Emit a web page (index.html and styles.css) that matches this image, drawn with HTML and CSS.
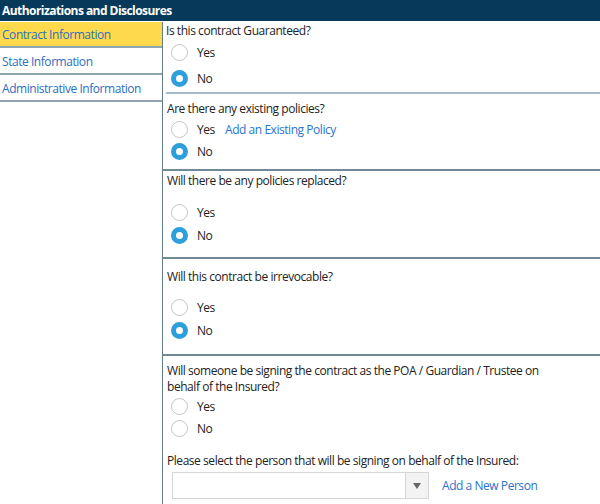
FILE: index.html
```html
<!DOCTYPE html>
<html>
<head>
<meta charset="utf-8">
<link rel="stylesheet" href="styles.css">
</head>
<body>
<div class="header">Authorizations and Disclosures</div>
<div class="layout">
  <nav class="nav">
    <a class="nav-item active">Contract Information</a>
    <a class="nav-item">State Information</a>
    <a class="nav-item">Administrative Information</a>
  </nav>
  <main class="main">
    <section class="q q1">
      <div class="q-text">Is this contract Guaranteed?</div>
      <div class="opt r26"><span class="radio"></span><span class="lbl">Yes</span></div>
      <div class="opt r26"><span class="radio on"></span><span class="lbl">No</span></div>
    </section>
    <section class="q q2">
      <div class="q-text">Are there any existing policies?</div>
      <div class="opt r22"><span class="radio"></span><span class="lbl">Yes</span><a class="link">Add an Existing Policy</a></div>
      <div class="opt r22"><span class="radio on"></span><span class="lbl">No</span></div>
    </section>
    <section class="q q3">
      <div class="q-text">Will there be any policies replaced?</div>
      <div class="opts">
        <div class="opt r23"><span class="radio"></span><span class="lbl">Yes</span></div>
        <div class="opt r23"><span class="radio on"></span><span class="lbl">No</span></div>
      </div>
    </section>
    <section class="q q4">
      <div class="q-text">Will this contract be irrevocable?</div>
      <div class="opts">
        <div class="opt r23"><span class="radio"></span><span class="lbl">Yes</span></div>
        <div class="opt r23"><span class="radio on"></span><span class="lbl">No</span></div>
      </div>
    </section>
    <section class="q q5">
      <div class="q-text wrap">Will someone be signing the contract as the POA / Guardian / Trustee on behalf of the Insured?</div>
      <div class="opt r22"><span class="radio"></span><span class="lbl">Yes</span></div>
      <div class="opt r22"><span class="radio"></span><span class="lbl">No</span></div>
      <div class="q-text sub">Please select the person that will be signing on behalf of the Insured:</div>
      <div class="select-row">
        <div class="select"><span class="select-btn"><span class="caret"></span></span></div>
        <a class="link">Add a New Person</a>
      </div>
    </section>
  </main>
</div>
</body>
</html>
```

FILE: styles.css
```css
html, body {
  margin: 0;
  padding: 0;
  background: #ffffff;
  font-family: "Open Sans", "Noto Sans", sans-serif;
  font-size: 12px;
  letter-spacing: -0.45px;
  color: #222222;
}
.header {
  height: 21px;
  line-height: 21px;
  background: #073a5a;
  color: #ffffff;
  font-weight: bold;
  padding-left: 2px;
  letter-spacing: -0.55px;
}
.layout {
  display: flex;
  margin-top: 1px;
  min-height: 482px;
}
.nav {
  width: 162px;
  flex: none;
  display: flex;
  flex-direction: column;
}
.nav-item {
  display: block;
  height: 25px;
  line-height: 27px;
  padding-left: 2px;
  color: #2b6ec2;
  border-bottom: 2px solid #8fa4b1;
  white-space: nowrap;
}
.nav-item.active {
  background: #fdd94b;
  height: 24px;
  line-height: 26px;
}
.main {
  flex: 1;
  border-left: 1px solid #617d8e;
}
.q {
  padding-left: 4px;
  border-bottom: 2px solid #6f8999;
}
.q1 {
  margin-left: 3px;
  padding-left: 0;
  border-bottom-color: #a8bac6;
  height: 70px;
}
.q1 .q-text { line-height: 17px; }
.q2 { padding-top: 5px; box-sizing: border-box; height: 77px; }
.q3 { padding-top: 0; height: 86px; }
.q4 { padding-top: 8px; height: 87px; }
.q5 { padding-top: 7px; border-bottom: none; }
.q-text {
  line-height: 19px;
}
.q-text.wrap {
  line-height: 16px;
  width: 385px;
}
.q5 .opt:first-of-type { margin-top: -1px; }
.q-text.sub {
  margin-top: 12px;
}
.q3 .opts { margin-top: 11px; }
.q4 .opts { margin-top: 10px; }
.opt {
  display: flex;
  align-items: center;
  padding-left: 4px;
}
.q1 .opt { padding-left: 5px; }
.r26 { height: 26px; }
.r22 { height: 22px; }
.r23 { height: 23px; }
.radio {
  width: 15px;
  height: 15px;
  border: 1px solid #c4c4c4;
  border-radius: 50%;
  box-sizing: content-box;
  background: #ffffff;
  flex: none;
}
.radio.on {
  border: 5px solid #2c9fdc;
  width: 7px;
  height: 7px;
}
.lbl {
  margin-left: 9px;
  width: 28px;
}
.link {
  color: #2b73cf;
}
.select-row {
  display: flex;
  align-items: center;
  margin-top: 2px;
  margin-left: 5px;
}
.select {
  width: 255px;
  height: 25px;
  border: 1px solid #d6d6d6;
  display: flex;
  justify-content: flex-end;
  margin-right: 13px;
}
.select-btn {
  width: 22px;
  border-left: 1px solid #d6d6d6;
  background: #f3f3f3;
  display: flex;
  align-items: center;
  justify-content: center;
}
.caret {
  width: 0;
  height: 0;
  border-left: 4px solid transparent;
  border-right: 4px solid transparent;
  border-top: 6px solid #666666;
}
```
